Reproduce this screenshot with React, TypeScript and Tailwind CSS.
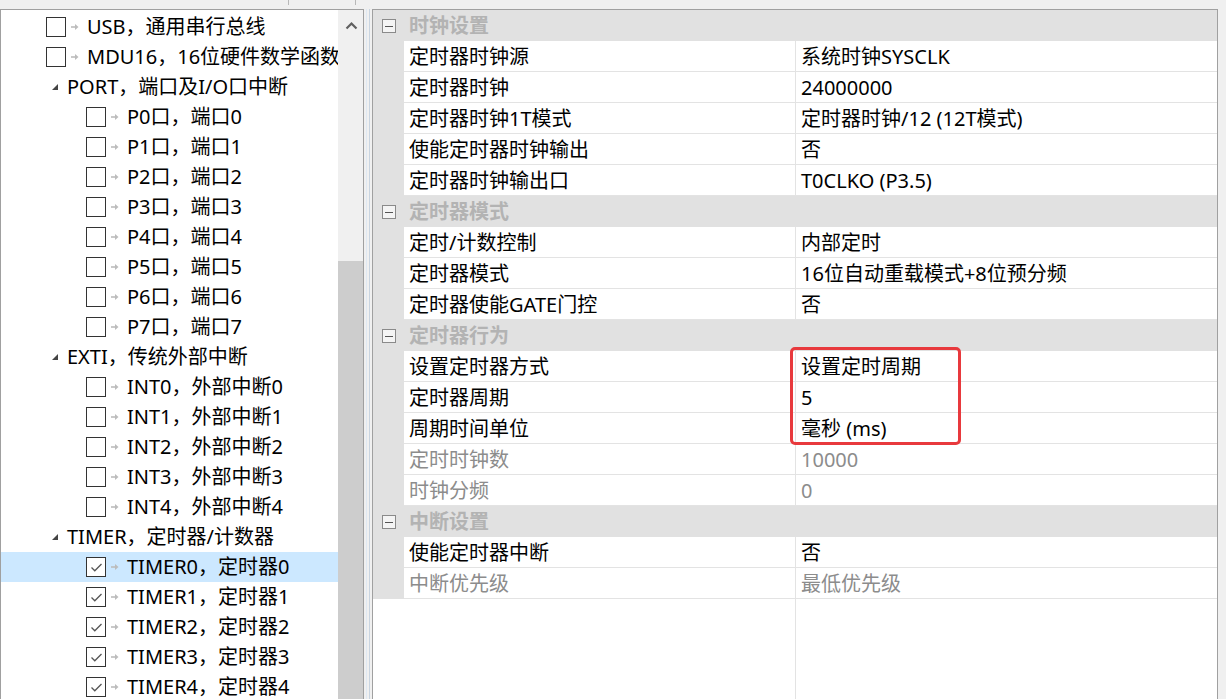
import React from "react";

type TreeItem = { kind: "leaf" | "group"; level: number; text: string; checked?: boolean; selected?: boolean };

const tree: TreeItem[] = [
  { kind: "leaf", level: 1, text: "USB，通用串行总线" },
  { kind: "leaf", level: 1, text: "MDU16，16位硬件数学函数库" },
  { kind: "group", level: 1, text: "PORT，端口及I/O口中断" },
  ...[0, 1, 2, 3, 4, 5, 6, 7].map((n) => ({ kind: "leaf" as const, level: 2, text: `P${n}口，端口${n}` })),
  { kind: "group", level: 1, text: "EXTI，传统外部中断" },
  ...[0, 1, 2, 3, 4].map((n) => ({ kind: "leaf" as const, level: 2, text: `INT${n}，外部中断${n}` })),
  { kind: "group", level: 1, text: "TIMER，定时器/计数器" },
  ...[0, 1, 2, 3, 4].map((n) => ({
    kind: "leaf" as const,
    level: 2,
    text: `TIMER${n}，定时器${n}`,
    checked: true,
    selected: n === 0,
  })),
];

type Prop = { label: string; value: string; disabled?: boolean };
type Section = { title: string; rows: Prop[] };

const sections: Section[] = [
  {
    title: "时钟设置",
    rows: [
      { label: "定时器时钟源", value: "系统时钟SYSCLK" },
      { label: "定时器时钟", value: "24000000" },
      { label: "定时器时钟1T模式", value: "定时器时钟/12 (12T模式)" },
      { label: "使能定时器时钟输出", value: "否" },
      { label: "定时器时钟输出口", value: "T0CLKO (P3.5)" },
    ],
  },
  {
    title: "定时器模式",
    rows: [
      { label: "定时/计数控制", value: "内部定时" },
      { label: "定时器模式", value: "16位自动重载模式+8位预分频" },
      { label: "定时器使能GATE门控", value: "否" },
    ],
  },
  {
    title: "定时器行为",
    rows: [
      { label: "设置定时器方式", value: "设置定时周期" },
      { label: "定时器周期", value: "5" },
      { label: "周期时间单位", value: "毫秒 (ms)" },
      { label: "定时时钟数", value: "10000", disabled: true },
      { label: "时钟分频", value: "0", disabled: true },
    ],
  },
  {
    title: "中断设置",
    rows: [
      { label: "使能定时器中断", value: "否" },
      { label: "中断优先级", value: "最低优先级", disabled: true },
    ],
  },
];

function Arrow() {
  return (
    <svg width="8" height="8" viewBox="0 0 8 8" className="shrink-0">
      <path d="M0 4H5" stroke="#bcbcbc" strokeWidth="1.6" />
      <path d="M4 1L7.5 4L4 7Z" fill="#bcbcbc" />
    </svg>
  );
}

function CheckBox({ checked }: { checked?: boolean }) {
  return (
    <span className="flex h-[20px] w-[20px] shrink-0 items-center justify-center border border-[#333333] bg-white">
      {checked && (
        <svg width="13" height="11" viewBox="0 0 13 11">
          <path d="M1.5 5.5L4.8 8.8L11.5 2" fill="none" stroke="#555555" strokeWidth="1.3" />
        </svg>
      )}
    </span>
  );
}

function TreeRow({ item }: { item: TreeItem }) {
  if (item.kind === "group") {
    return (
      <div className="flex h-[30px] items-center pl-[50px]">
        <svg width="8" height="8" viewBox="0 0 8 8" className="shrink-0">
          <path d="M7 1V7H1Z" fill="#444444" />
        </svg>
        <span className="ml-[8px] whitespace-nowrap">{item.text}</span>
      </div>
    );
  }
  const pl = item.level === 1 ? "pl-[45px]" : "pl-[85px]";
  return (
    <div className={`flex h-[30px] items-center ${pl} ${item.selected ? "bg-[#cce8ff]" : ""}`}>
      <CheckBox checked={item.checked} />
      <span className="ml-[5px]">
        <Arrow />
      </span>
      <span className="ml-[8px] whitespace-nowrap">{item.text}</span>
    </div>
  );
}

function Expander() {
  return (
    <span className="flex h-[14px] w-[14px] items-center justify-center border border-[#8a8a8a] bg-[#f4f4f4]">
      <span className="h-px w-[8px] bg-[#555555]" />
    </span>
  );
}

export default function App() {
  return (
    <div
      className="relative h-[699px] w-[1226px] overflow-hidden bg-[#f0f0f0] text-[20px] leading-none text-black"
      style={{ fontFamily: '"Noto Sans", "Noto Sans CJK SC", sans-serif' }}
    >
      {/* top strip */}
      <div className="flex h-[9px]">
        <div className="w-[288px]" />
        <div className="h-[5px] w-px bg-[#b8b8b8]" />
        <div className="w-[66px]" />
        <div className="h-[5px] w-px bg-[#b8b8b8]" />
      </div>

      <div className="flex h-[690px]">
        {/* left tree panel */}
        <div className="flex w-[364px] shrink-0 border-l border-r border-t border-[#a0a0a0] bg-white">
          <div className="w-[337px] overflow-hidden pt-[2px]">
            {tree.map((item) => (
              <TreeRow key={item.text} item={item} />
            ))}
          </div>
          <div className="flex w-[25px] flex-col bg-[#f0f0f0]">
            <div className="flex h-[30px] items-center justify-center pl-[1px]">
              <svg width="13" height="9" viewBox="0 0 13 9">
                <path d="M1.5 7.5L6.5 2.5L11.5 7.5" fill="none" stroke="#606060" strokeWidth="2.2" />
              </svg>
            </div>
            <div className="h-[221px]" />
            <div className="flex-1 bg-[#cdcdcd]" />
          </div>
        </div>

        {/* splitter */}
        <div className="flex w-[8px] shrink-0 bg-[#f0f0f0]">
          <div className="ml-[2px] w-px bg-[#dfe8f2]" />
          <div className="ml-[2px] w-px bg-[#c8d4e0]" />
        </div>

        {/* property grid */}
        <div className="relative flex w-[846px] shrink-0 flex-col border-l border-r border-t border-[#a0a0a0] bg-white">
          {sections.map((s) => (
            <div key={s.title}>
              <div className="flex h-[31px] items-center bg-[#e1e1e1] pt-px">
                <div className="flex w-[31px] justify-center pl-[1px]">
                  <Expander />
                </div>
                <span className="pl-[5px] font-bold text-[#b3b3b3]">{s.title}</span>
              </div>
              {s.rows.map((r) => (
                <div key={r.label} className="flex h-[31px]">
                  <div className="w-[31px] shrink-0 bg-[#e1e1e1]" />
                  <div
                    className={`flex w-[392px] shrink-0 items-center border-b border-r border-[#e3e3e3] pl-[5px] pt-px ${
                      r.disabled ? "text-[#8c8c8c]" : ""
                    }`}
                  >
                    {r.label}
                  </div>
                  <div
                    className={`flex flex-1 items-center border-b border-[#e3e3e3] pl-[5px] pt-px ${
                      r.disabled ? "text-[#8c8c8c]" : ""
                    }`}
                  >
                    {r.value}
                  </div>
                </div>
              ))}
            </div>
          ))}
          <div className="flex flex-1">
            <div className="w-[31px] shrink-0" />
            <div className="w-[392px] shrink-0 border-r border-[#e3e3e3]" />
          </div>

          {/* annotation */}
          <div className="pointer-events-none absolute left-[417px] top-[337px] h-[98px] w-[171px] rounded-[5px] border-[3px] border-[#e8393d]" />
        </div>
      </div>
    </div>
  );
}
